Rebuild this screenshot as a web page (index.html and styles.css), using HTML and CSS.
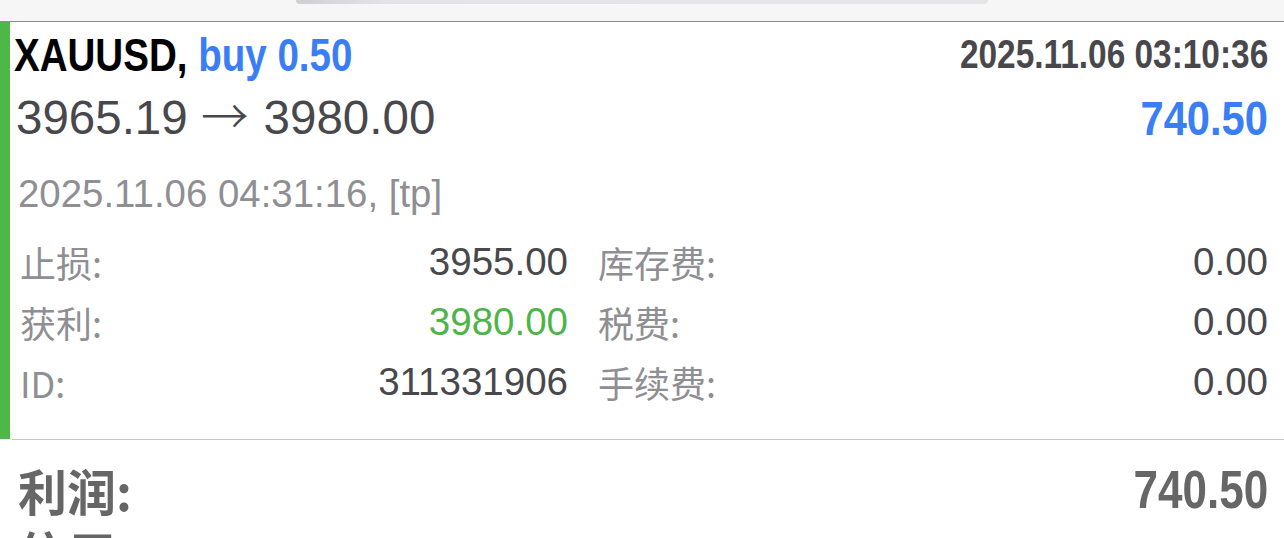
FILE: index.html
```html
<!DOCTYPE html>
<html lang="zh-CN">
<head>
<meta charset="utf-8">
<title>XAUUSD</title>
<link rel="stylesheet" href="styles.css">
</head>
<body>
<div class="topbar"><div class="search"></div></div>
<div class="card">
  <div class="accent"></div>
  <div class="content">
    <div class="row-head">
      <div class="symbol">XAUUSD, <span class="side">buy 0.50</span></div>
      <div class="opentime">2025.11.06 03:10:36</div>
    </div>
    <div class="row-price">
      <div class="prices">3965.19 <span class="arrow">→</span> 3980.00</div>
      <div class="profit">740.50</div>
    </div>
    <div class="closetime">2025.11.06 04:31:16, [tp]</div>
    <div class="details">
      <div class="cell left"><span class="label">止损:</span><span class="value">3955.00</span></div>
      <div class="cell"><span class="label">库存费:</span><span class="value">0.00</span></div>
      <div class="cell left"><span class="label">获利:</span><span class="value green">3980.00</span></div>
      <div class="cell"><span class="label">税费:</span><span class="value">0.00</span></div>
      <div class="cell left"><span class="label">ID:</span><span class="value">311331906</span></div>
      <div class="cell"><span class="label">手续费:</span><span class="value">0.00</span></div>
    </div>
  </div>
</div>
<div class="sep"></div>
<div class="summary">
  <div class="sum-row"><span class="sum-label">利润:</span><span class="sum-value">740.50</span></div>
  <div class="sum-row"><span class="sum-label">信用:</span><span class="sum-value"></span></div>
</div>
</body>
</html>
```
FILE: styles.css
```css
html, body {
  margin: 0;
  padding: 0;
  background: #ffffff;
  overflow: hidden;
}
body {
  width: 1284px;
  height: 538px;
  font-family: "Liberation Sans", Arial, "Noto Sans CJK SC", sans-serif;
}
.topbar {
  height: 22px;
  background: #f6f6f6;
  border-bottom: 1px solid #8c8c8c;
  padding-left: 296px;
  box-sizing: border-box;
}
.search {
  width: 692px;
  height: 4px;
  background: linear-gradient(to right, #cfcfd1 0px, #e4e4e7 90px, #e5e5e8 100%);
  border-radius: 0 0 14px 14px;
}
.card {
  display: flex;
  height: 417px;
}
.accent {
  width: 10px;
  background: #4db847;
}
.content {
  flex: 1;
  padding: 0 16px 0 6px;
}
.row-head {
  height: 65px;
  display: flex;
  justify-content: space-between;
  align-items: center;
}
.symbol {
  font-weight: bold;
  font-size: 47px;
  color: #000000;
  margin-left: -2px;
  transform: scaleX(0.82);
  transform-origin: left center;
  white-space: nowrap;
}
.side {
  color: #3a7ef5;
}
.opentime {
  font-weight: bold;
  font-size: 40px;
  color: #48484c;
  transform: scaleX(0.835);
  transform-origin: right center;
  white-space: nowrap;
}
.row-price {
  height: 62px;
  display: flex;
  justify-content: space-between;
  align-items: center;
}
.prices {
  font-size: 47.5px;
  line-height: 56px;
  color: #48484c;
  white-space: nowrap;
}
.arrow {
  font-family: "Noto Sans CJK SC", "DejaVu Sans", sans-serif;
  font-weight: 300;
  line-height: 0;
  margin: 0 2px 0 0;
}
.profit {
  font-weight: bold;
  font-size: 49px;
  color: #3a7ef5;
  transform: scaleX(0.85);
  transform-origin: right center;
}
.closetime {
  margin-top: 15px;
  height: 59px;
  display: flex;
  align-items: center;
  font-size: 38.4px;
  color: #8e8e93;
  padding-left: 2px;
}
.details {
  margin-top: 9px;
  display: grid;
  grid-template-columns: 552px 1fr;
  column-gap: 30px;
}
.cell {
  height: 60px;
  display: flex;
  justify-content: space-between;
  align-items: center;
}
.cell.left {
  padding-left: 4px;
}
.label {
  font-family: "Noto Sans CJK SC", "Liberation Sans", sans-serif;
  font-size: 36px;
  line-height: 48px;
  color: #8e8e93;
}
.value {
  font-size: 38.5px;
  color: #48484c;
}
.value.green {
  color: #4cb548;
}
.sep {
  margin-left: 12px;
  height: 1px;
  background: #c8c8c8;
}
.summary {
  padding: 19px 16px 0 18px;
}
.sum-row {
  height: 62px;
  display: flex;
  justify-content: space-between;
  align-items: center;
}
.sum-label {
  font-family: "Noto Sans CJK SC", sans-serif;
  font-weight: bold;
  font-size: 49px;
  line-height: 56px;
  color: #666666;
}
.sum-value {
  font-weight: bold;
  font-size: 53px;
  line-height: 56px;
  color: #666666;
  transform: scaleX(0.83);
  transform-origin: right center;
}
```
